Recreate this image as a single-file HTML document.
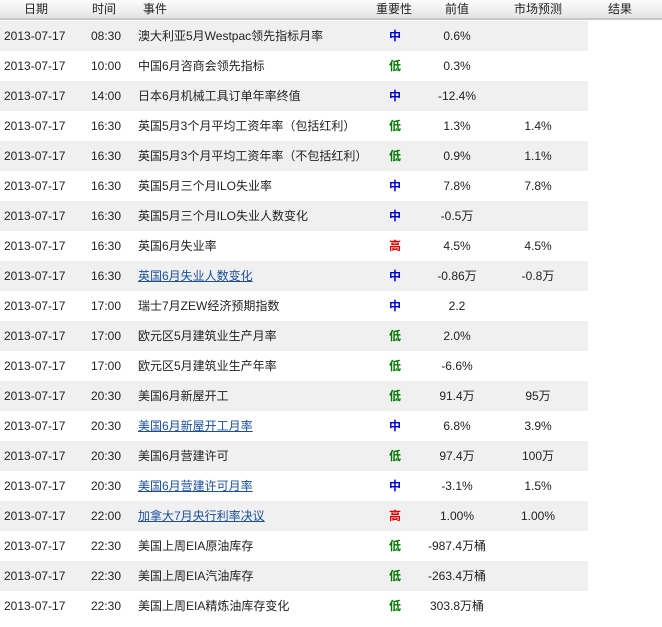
<!DOCTYPE html>
<html><head><meta charset="utf-8"><style>
body{margin:0;width:662px;height:627px;background:#fff;font-family:"Liberation Sans","Noto Sans CJK SC",sans-serif;font-size:12px;color:#222;position:relative;overflow:hidden}
.h{position:absolute;left:0;top:0;width:662px;height:18px;background:linear-gradient(#fdfdfd,#e4e4e4);border-bottom:2px solid #c8c8c8}
.h span,.r span{position:absolute;top:0;line-height:18px;white-space:nowrap}
.r{position:absolute;left:0;width:588px;height:30px}
.r span{line-height:30px}
.g{background:#f0f0f0}
.c{text-align:center}
a{color:#1a4f9c;text-decoration:underline}
b.m{color:#0000cc}b.l{color:#007700}b.hi{color:#dd0000}
</style></head><body>
<div class="h">
<span style="left:24px">日期</span><span style="left:92px">时间</span><span style="left:143px">事件</span>
<span style="left:376px">重要性</span><span style="left:445px">前值</span><span style="left:514px">市场预测</span><span style="left:608px">结果</span>
</div>
<div id="rows"></div>
<script>
var d=[["08:30","澳大利亚5月Westpac领先指标月率","m","0.6%",""],
["10:00","中国6月咨商会领先指标","l","0.3%",""],
["14:00","日本6月机械工具订单年率终值","m","-12.4%",""],
["16:30","英国5月3个月平均工资年率（包括红利）","l","1.3%","1.4%"],
["16:30","英国5月3个月平均工资年率（不包括红利）","l","0.9%","1.1%"],
["16:30","英国5月三个月ILO失业率","m","7.8%","7.8%"],
["16:30","英国5月三个月ILO失业人数变化","m","-0.5万",""],
["16:30","英国6月失业率","hi","4.5%","4.5%"],
["16:30","*英国6月失业人数变化","m","-0.86万","-0.8万"],
["17:00","瑞士7月ZEW经济预期指数","m","2.2",""],
["17:00","欧元区5月建筑业生产月率","l","2.0%",""],
["17:00","欧元区5月建筑业生产年率","l","-6.6%",""],
["20:30","美国6月新屋开工","l","91.4万","95万"],
["20:30","*美国6月新屋开工月率","m","6.8%","3.9%"],
["20:30","美国6月营建许可","l","97.4万","100万"],
["20:30","*美国6月营建许可月率","m","-3.1%","1.5%"],
["22:00","*加拿大7月央行利率决议","hi","1.00%","1.00%"],
["22:30","美国上周EIA原油库存","l","-987.4万桶",""],
["22:30","美国上周EIA汽油库存","l","-263.4万桶",""],
["22:30","美国上周EIA精炼油库存变化","l","303.8万桶",""]];
var imp={m:"中",l:"低",hi:"高"},h="";
d.forEach(function(r,i){
var ev=r[1][0]=="*"?'<a>'+r[1].slice(1)+'</a>':r[1];
h+='<div class="r'+(i%2==0?' g':'')+'" style="top:'+(21+30*i)+'px">'+
'<span style="left:4px">2013-07-17</span><span style="left:91px">'+r[0]+'</span>'+
'<span style="left:138px">'+ev+'</span>'+
'<span class="c" style="left:375px;width:40px"><b class="'+r[2]+'">'+imp[r[2]]+'</b></span>'+
'<span class="c" style="left:417px;width:80px">'+r[3]+'</span>'+
'<span class="c" style="left:498px;width:80px">'+r[4]+'</span></div>';});
document.getElementById("rows").innerHTML=h;
</script>
</body></html>
